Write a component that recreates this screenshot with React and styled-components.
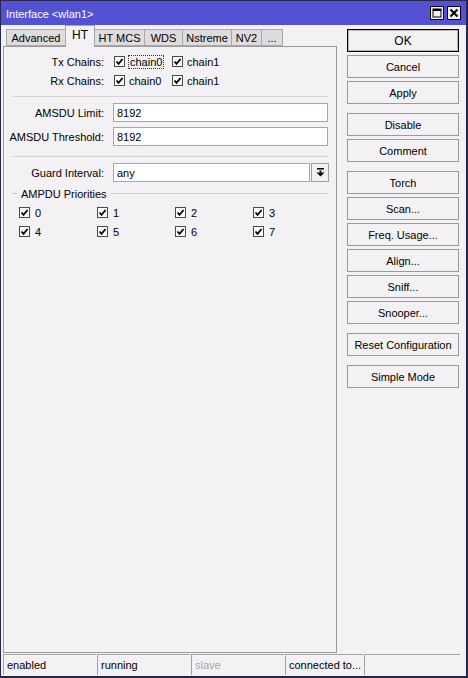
import React from "react";
import styled, { createGlobalStyle } from "styled-components";

const GlobalStyle = createGlobalStyle`
  html, body {
    margin: 0;
    padding: 0;
    background: #f4f1f4;
  }
  body {
    font-family: "Liberation Sans", Arial, sans-serif;
    font-size: 11px;
    color: #000;
  }
`;

const tabs = [
  { label: "Advanced", width: 60 },
  { label: "HT", width: 30, active: true },
  { label: "HT MCS", width: 51 },
  { label: "WDS", width: 39 },
  { label: "Nstreme", width: 50 },
  { label: "NV2", width: 31 },
  { label: "...", width: 22 },
];

const buttonGroups = [
  ["OK", "Cancel", "Apply"],
  ["Disable", "Comment"],
  ["Torch", "Scan...", "Freq. Usage...", "Align...", "Sniff...", "Snooper..."],
  ["Reset Configuration"],
  ["Simple Mode"],
];

const statusCells = [
  { text: "enabled", width: 93 },
  { text: "running", width: 93 },
  { text: "slave", width: 93, muted: true },
  { text: "connected to...", width: 78 },
  { text: "", width: 96 },
];

export default function App() {
  return (
    <>
      <GlobalStyle />
      <Window>
        <TitleBar>
          <TitleText>Interface &lt;wlan1&gt;</TitleText>
          <TitleButton>
            <svg width="10" height="10" viewBox="0 0 10 10">
              <rect x="1" y="1" width="8" height="8" fill="none" stroke="#000" strokeWidth="1" />
              <rect x="1" y="1" width="8" height="2" fill="#000" />
            </svg>
          </TitleButton>
          <TitleButton>
            <svg width="10" height="10" viewBox="0 0 10 10">
              <path d="M1.5 1.5 L8.5 8.5 M8.5 1.5 L1.5 8.5" stroke="#000" strokeWidth="2" />
            </svg>
          </TitleButton>
        </TitleBar>

        <Body>
          <LeftColumn>
            <TabRow>
              {tabs.map((t) => (
                <Tab key={t.label} $width={t.width} $active={t.active}>
                  {t.label}
                </Tab>
              ))}
            </TabRow>
            <Panel>
              <Row>
                <Label>Tx Chains:</Label>
                <CheckItem>
                  <CheckBox />
                  <FocusText>chain0</FocusText>
                </CheckItem>
                <CheckItem>
                  <CheckBox />
                  <ItemText>chain1</ItemText>
                </CheckItem>
              </Row>
              <Row>
                <Label>Rx Chains:</Label>
                <CheckItem>
                  <CheckBox />
                  <ItemText>chain0</ItemText>
                </CheckItem>
                <CheckItem>
                  <CheckBox />
                  <ItemText>chain1</ItemText>
                </CheckItem>
              </Row>

              <Separator $mt={6} />

              <Row $mt={6}>
                <Label>AMSDU Limit:</Label>
                <TextField $width={215}>8192</TextField>
              </Row>
              <Row $mt={5}>
                <Label>AMSDU Threshold:</Label>
                <TextField $width={215}>8192</TextField>
              </Row>

              <Separator $mt={10} />

              <Row $mt={6}>
                <Label>Guard Interval:</Label>
                <TextField $width={197}>any</TextField>
                <DropButton>
                  <svg width="9" height="9" viewBox="0 0 9 9">
                    <rect x="1" y="0" width="7" height="1.5" fill="#000" />
                    <rect x="3.5" y="2.5" width="2" height="2" fill="#000" />
                    <polygon points="0.5,4.5 8.5,4.5 4.5,8.5" fill="#000" />
                  </svg>
                </DropButton>
              </Row>

              <GroupHeader>
                <span>AMPDU Priorities</span>
              </GroupHeader>

              <PriorityGrid>
                {[0, 1, 2, 3, 4, 5, 6, 7].map((n) => (
                  <PriorityItem key={n}>
                    <CheckBox />
                    <span>{n}</span>
                  </PriorityItem>
                ))}
              </PriorityGrid>
            </Panel>
          </LeftColumn>

          <ButtonColumn>
            {buttonGroups.map((group, gi) => (
              <ButtonGroup key={gi}>
                {group.map((b) => (
                  <ActionButton key={b} $default={b === "OK"}>
                    {b}
                  </ActionButton>
                ))}
              </ButtonGroup>
            ))}
          </ButtonColumn>
        </Body>

        <StatusBar>
          {statusCells.map((c, i) => (
            <StatusCell key={i} $width={c.width} $muted={c.muted}>
              {c.text}
            </StatusCell>
          ))}
        </StatusBar>
      </Window>
    </>
  );
}

function CheckBox() {
  return (
    <Box>
      <svg width="9" height="9" viewBox="0 0 9 9">
        <path d="M1.5 4.5 L3.5 6.8 L7.6 2" fill="none" stroke="#000" strokeWidth="1.8" />
      </svg>
    </Box>
  );
}

const Window = styled.div`
  width: 468px;
  height: 678px;
  box-sizing: border-box;
  border: 1px solid #26264a;
  border-right-width: 2px;
  border-bottom-width: 2px;
  background: #f4f1f4;
  display: flex;
  flex-direction: column;
  overflow: hidden;
`;

const TitleBar = styled.div`
  flex: none;
  height: 24px;
  background: #5252d2;
  color: #fff;
  display: flex;
  align-items: center;
  gap: 3px;
  padding: 0 5px 0 5px;
`;

const TitleText = styled.div`
  flex: 1;
  font-size: 11px;
  padding-top: 1px;
`;

const TitleButton = styled.div`
  width: 14px;
  height: 14px;
  box-sizing: border-box;
  border: 1px solid #000;
  background: #f2f0f2;
  display: flex;
  align-items: center;
  justify-content: center;
`;

const Body = styled.div`
  flex: 1;
  min-height: 0;
  display: flex;
`;

const LeftColumn = styled.div`
  width: 334px;
  margin-left: 2px;
  margin-bottom: 1px;
  display: flex;
  flex-direction: column;
`;

const TabRow = styled.div`
  flex: none;
  height: 21px;
  display: flex;
  align-items: flex-end;
  padding-left: 3px;
`;

const Tab = styled.div`
  width: ${(p) => p.$width}px;
  height: ${(p) => (p.$active ? 22 : 17)}px;
  margin-bottom: ${(p) => (p.$active ? -1 : 0)}px;
  box-sizing: border-box;
  border: 1px solid #a9a7a9;
  border-bottom: ${(p) => (p.$active ? "none" : "1px solid #a9a7a9")};
  background: ${(p) => (p.$active ? "#f4f1f4" : "#dfdcdf")};
  font-size: ${(p) => (p.$active ? 12 : 11)}px;
  display: flex;
  align-items: center;
  justify-content: center;
  padding-bottom: ${(p) => (p.$active ? 3 : 0)}px;
  position: relative;
  z-index: ${(p) => (p.$active ? 1 : 0)};
  & + & {
    margin-left: -1px;
  }
`;

const Panel = styled.div`
  flex: 1;
  border: 1px solid #9c9a9c;
  background: #f4f1f4;
  padding-top: 5px;
  display: flex;
  flex-direction: column;
`;

const Row = styled.div`
  display: flex;
  align-items: center;
  height: 19px;
  margin-top: ${(p) => p.$mt || 0}px;
`;

const Label = styled.div`
  flex: none;
  width: 100px;
  margin-right: 9px;
  text-align: right;
  white-space: nowrap;
`;

const CheckItem = styled.div`
  width: 58px;
  display: flex;
  align-items: center;
  gap: 3px;
  margin-left: 1px;
  & + & {
    margin-left: 0;
  }
`;

const ItemText = styled.span`
  padding: 1px;
`;

const FocusText = styled.span`
  padding: 0 1px;
  border: 1px dotted #333;
`;

const Box = styled.span`
  flex: none;
  width: 11px;
  height: 11px;
  box-sizing: border-box;
  border: 1px solid #4a4a4a;
  background: #fff;
  display: flex;
  align-items: center;
  justify-content: center;
`;

const Separator = styled.div`
  height: 1px;
  background: #d6d2d6;
  margin: ${(p) => p.$mt}px 8px 0 8px;
`;

const TextField = styled.div`
  width: ${(p) => p.$width}px;
  height: 19px;
  box-sizing: border-box;
  border: 1px solid #a8a6a8;
  background: #fff;
  padding-left: 3px;
  display: flex;
  align-items: center;
`;

const DropButton = styled.div`
  width: 18px;
  height: 19px;
  margin-left: 1px;
  box-sizing: border-box;
  border: 1px solid #a0a0a0;
  background: #f4f1f4;
  display: flex;
  align-items: center;
  justify-content: center;
`;

const GroupHeader = styled.div`
  display: flex;
  align-items: center;
  gap: 4px;
  height: 13px;
  margin: 5px 8px 0 8px;
  &::before {
    content: "";
    width: 5px;
    height: 1px;
    background: #c8c4c8;
  }
  &::after {
    content: "";
    flex: 1;
    height: 1px;
    background: #d6d2d6;
  }
`;

const PriorityGrid = styled.div`
  display: grid;
  grid-template-columns: repeat(4, 78px);
  grid-auto-rows: 19px;
  padding-left: 15px;
  margin-top: 3px;
`;

const PriorityItem = styled.div`
  display: flex;
  align-items: center;
  gap: 5px;
`;

const ButtonColumn = styled.div`
  width: 112px;
  margin-left: 10px;
  padding-top: 4px;
  display: flex;
  flex-direction: column;
  gap: 9px;
`;

const ButtonGroup = styled.div`
  display: flex;
  flex-direction: column;
  gap: 3px;
`;

const ActionButton = styled.div`
  height: 23px;
  box-sizing: border-box;
  border: 1px solid ${(p) => (p.$default ? "#000" : "#9a989a")};
  box-shadow: ${(p) => (p.$default ? "inset 0 0 0 1px #b8b6b8" : "none")};
  background: #f4f1f4;
  display: flex;
  align-items: center;
  justify-content: center;
  font-size: ${(p) => (p.$default ? 12 : 11)}px;
  white-space: nowrap;
`;

const StatusBar = styled.div`
  flex: none;
  height: 22px;
  display: flex;
  gap: 1px;
  padding-left: 2px;
`;

const StatusCell = styled.div`
  width: ${(p) => p.$width}px;
  height: 21px;
  box-sizing: border-box;
  border-top: 1px solid #a4a2a4;
  border-left: 1px solid #a4a2a4;
  padding-left: 3px;
  display: flex;
  align-items: center;
  color: ${(p) => (p.$muted ? "#a8a6a8" : "#000")};
  white-space: nowrap;
`;
